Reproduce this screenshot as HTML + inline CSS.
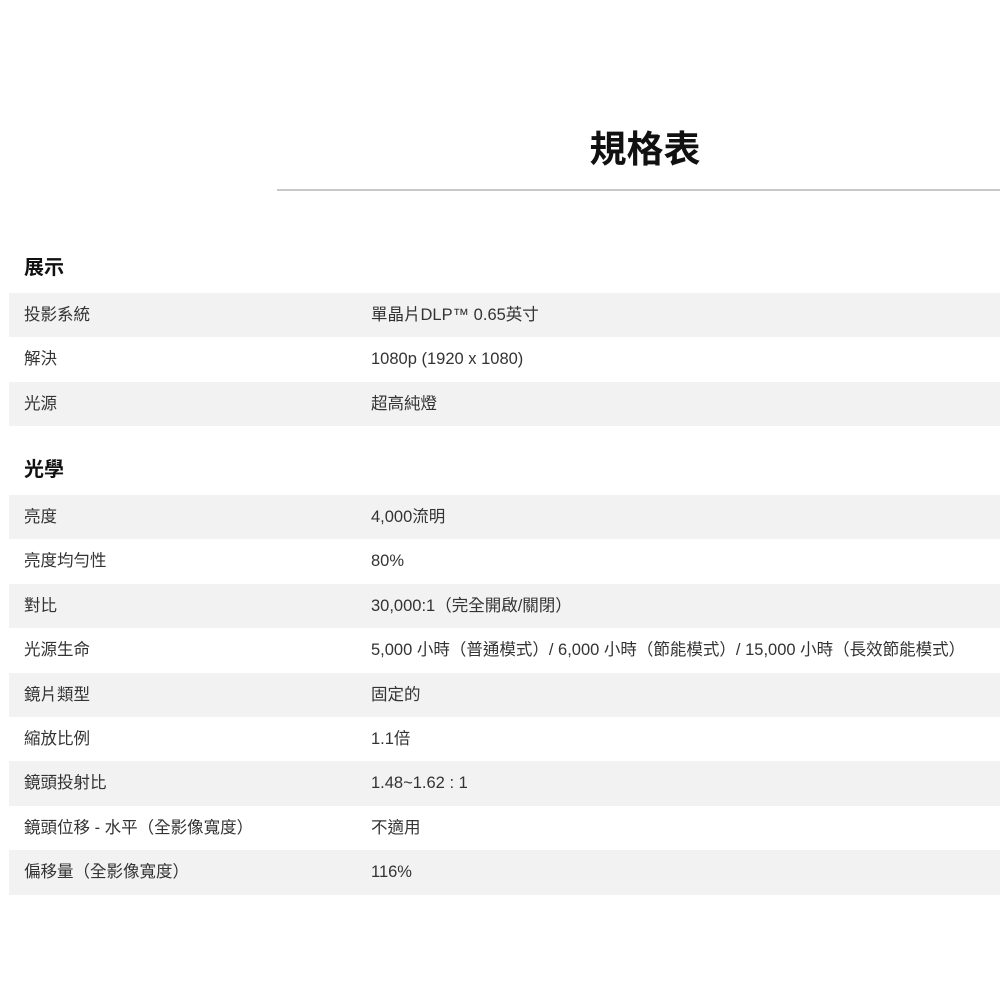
<!DOCTYPE html>
<html><head><meta charset="utf-8"><style>
body{margin:0;width:1000px;height:1000px;background:#fff;font-family:"Liberation Sans","Noto Sans CJK TC",sans-serif;color:#222;position:relative;overflow:hidden}
h1{position:absolute;left:0;top:127px;width:1290px;text-align:center;margin:0;font-size:37px;font-weight:bold;color:#111;line-height:46px}
.line{position:absolute;left:277px;top:189px;width:723px;height:2px;background:#c8c8c8}
h2{position:absolute;left:24px;margin:0;font-size:20px;font-weight:bold;color:#111;line-height:28px}
.tbl{position:absolute;left:9px;width:991px}
.r{height:44.4px;line-height:44.4px;font-size:16.5px;color:#333;position:relative}
.r.g{background:#f2f2f2}
.r span{position:absolute;left:15px}
.r b{position:absolute;left:362px;font-weight:normal;white-space:nowrap}
</style></head><body>
<h1>規格表</h1>
<div class="line"></div>
<h2 style="top:254px">展示</h2>
<div class="tbl" style="top:293px">
<div class="r g"><span>投影系統</span><b>單晶片DLP™ 0.65英寸</b></div>
<div class="r"><span>解決</span><b>1080p (1920 x 1080)</b></div>
<div class="r g"><span>光源</span><b>超高純燈</b></div>
</div>
<h2 style="top:456px">光學</h2>
<div class="tbl" style="top:495px">
<div class="r g"><span>亮度</span><b>4,000流明</b></div>
<div class="r"><span>亮度均勻性</span><b>80%</b></div>
<div class="r g"><span>對比</span><b>30,000:1（完全開啟/關閉）</b></div>
<div class="r"><span>光源生命</span><b>5,000 小時（普通模式）/ 6,000 小時（節能模式）/ 15,000 小時（長效節能模式）</b></div>
<div class="r g"><span>鏡片類型</span><b>固定的</b></div>
<div class="r"><span>縮放比例</span><b>1.1倍</b></div>
<div class="r g"><span>鏡頭投射比</span><b>1.48~1.62 : 1</b></div>
<div class="r"><span>鏡頭位移 - 水平（全影像寬度）</span><b>不適用</b></div>
<div class="r g"><span>偏移量（全影像寬度）</span><b>116%</b></div>
</div>
</body></html>
